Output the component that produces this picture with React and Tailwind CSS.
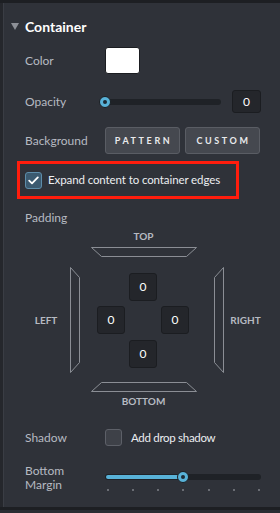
import React from 'react';

function Trapezoid({ side }) {
  // outlines of the padding edges
  const shapes = {
    top: { w: 106, h: 10, pts: '0.5,0.5 105.5,0.5 95.5,9.5 10.5,9.5' },
    bottom: { w: 106, h: 10, pts: '10.5,0.5 95.5,0.5 105.5,9.5 0.5,9.5' },
    left: { w: 10, h: 106, pts: '0.5,0.5 9.5,10.5 9.5,95.5 0.5,105.5' },
    right: { w: 10, h: 106, pts: '9.5,0.5 0.5,10.5 0.5,95.5 9.5,105.5' },
  };
  const s = shapes[side];
  return (
    <svg width={s.w} height={s.h} viewBox={`0 0 ${s.w} ${s.h}`} className="block shrink-0">
      <polygon points={s.pts} fill="none" stroke="#8b8e95" strokeWidth="1" />
    </svg>
  );
}

function NumBox({ value = '0', className = '' }) {
  return (
    <div className={`flex items-center justify-center rounded-[3px] border border-[#1b1d21] bg-[#24262b] text-[12px] text-white ${className}`}>
      {value}
    </div>
  );
}

function Knob() {
  return (
    <div className="flex h-[12px] w-[12px] items-center justify-center rounded-full border border-[#1b1d21] bg-[#58b2d8]">
      <div className="h-[4px] w-[4px] rounded-full bg-[#1d2b35]" />
    </div>
  );
}

function Label({ children }) {
  return <div className="w-[80px] shrink-0 text-[12px] text-[#b6bac2]">{children}</div>;
}

export default function App() {
  const ticks = [0, 1, 2, 3, 4, 5, 6];
  return (
    <div className="flex h-[513px] w-[280px] flex-col overflow-hidden bg-[#2f3239]" style={{ fontFamily: 'Lato, "Noto Sans", sans-serif' }}>
      <div className="h-[3px] shrink-0 bg-[#1d1f23]" />
      <div className="flex flex-1">
        <div className="w-[4px] shrink-0 border-r border-[#3a3d44] bg-[#25272c]" />
        <div className="flex flex-1 flex-col">
          <div className="flex flex-1 flex-col pl-[21px] pr-[19px]">
            {/* header */}
            <div className="mt-[9px] flex h-[28px] items-center">
              <div className="-ml-[14px] mr-[6px] h-0 w-0 border-x-[4px] border-t-[7px] border-x-transparent border-t-[#8d9097]" />
              <span className="text-[14px] font-bold text-white">Container</span>
            </div>

            {/* color */}
            <div className="mt-[7px] flex h-[27px] items-center">
              <Label>Color</Label>
              <div className="h-[27px] w-[35px] rounded-[3px] border border-[#1b1d21] bg-white" />
            </div>

            {/* opacity */}
            <div className="mt-[16px] flex h-[23px] items-center">
              <div className="w-[75px] shrink-0 text-[12px] text-[#b6bac2]">Opacity</div>
              <div className="relative flex h-[6px] w-[121px] items-center rounded-full bg-[#1f2227]">
                <div className="absolute -left-[1px] top-1/2 -translate-y-1/2">
                  <Knob />
                </div>
              </div>
              <NumBox className="ml-auto h-[23px] w-[29px]" />
            </div>

            {/* background */}
            <div className="mt-[14px] flex h-[27px] items-center">
              <Label>Background</Label>
              <div className="flex gap-[5px]">
                {['PATTERN', 'CUSTOM'].map((t) => (
                  <div key={t} className="flex h-[27px] w-[75px] items-center justify-center rounded-[3px] border border-[#5a5d64] bg-[#45484f] pl-[2px] text-[9px] font-bold tracking-[2.6px] text-[#e9eaec]">
                    {t}
                  </div>
                ))}
              </div>
            </div>

            {/* expand */}
            <div className="-ml-[8px] mt-[7px] flex h-[38px] w-[222px] items-center border-[3px] border-[#ff1d0d] pl-[5px]">
              <div className="flex h-[17px] w-[17px] items-center justify-center rounded-[3px] border border-[#5d8daa] bg-[#3b5a70]">
                <svg width="11" height="9" viewBox="0 0 11 9">
                  <path d="M1.2 4.6 L4 7.3 L9.8 1.4" fill="none" stroke="#ffffff" strokeWidth="1.8" strokeLinecap="round" strokeLinejoin="round" />
                </svg>
              </div>
              <span className="ml-[6px] text-[11.5px] tracking-[-0.1px] text-[#eceef1]">Expand content to container edges</span>
            </div>

            {/* padding */}
            <div className="mt-[11px] flex h-[16px] items-center text-[12px] text-[#b6bac2]">Padding</div>

            <div className="flex w-[236px] flex-col">
              <div className="mt-[4px] flex h-[12px] items-center justify-center pl-[1px] text-[10px] font-bold text-[#b6bac2]">TOP</div>
              <div className="mt-[5px] flex justify-center pl-[1px]">
                <Trapezoid side="top" />
              </div>
              <div className="mt-[10px] flex h-[106px] items-center">
                <div className="w-[42px] shrink-0 text-center text-[10px] font-bold text-[#b6bac2]">LEFT</div>
                <div className="ml-[3px]">
                  <Trapezoid side="left" />
                </div>
                <div className="ml-[17px] grid grid-cols-[28px_28px_28px] grid-rows-[28px_28px_28px] gap-x-[4px] gap-y-[5.5px]">
                  <div />
                  <NumBox />
                  <div />
                  <NumBox />
                  <div />
                  <NumBox />
                  <div />
                  <NumBox />
                  <div />
                </div>
                <div className="ml-[25px]">
                  <Trapezoid side="right" />
                </div>
                <div className="ml-[6px] w-[31px] shrink-0 text-center text-[10px] font-bold text-[#b6bac2]">RIGHT</div>
              </div>
              <div className="mt-[9px] flex justify-center pl-[1px]">
                <Trapezoid side="bottom" />
              </div>
              <div className="mt-[3px] flex h-[12px] items-center justify-center pl-[1px] text-[10px] font-bold text-[#b6bac2]">BOTTOM</div>
            </div>

            {/* shadow */}
            <div className="mt-[21px] flex h-[19px] items-center">
              <Label>Shadow</Label>
              <div className="h-[17px] w-[17px] rounded-[3px] border border-[#5d6068] bg-[#3e4148]" />
              <span className="ml-[9px] text-[11.5px] tracking-[-0.3px] text-[#eceef1]">Add drop shadow</span>
            </div>

            {/* bottom margin */}
            <div className="mt-[17px] flex h-[28px]">
              <div className="w-[80px] shrink-0 text-[12px] leading-[14px] text-[#b6bac2]">
                Bottom
                <br />
                Margin
              </div>
              <div className="flex w-[156px] flex-col pt-[10px]">
                <div className="relative flex h-[6px] items-center rounded-full bg-[#1f2227]">
                  <div className="ml-[1px] h-[4px] w-[77px] rounded-full bg-[#58b2d8]" />
                  <div className="absolute left-[72px] top-1/2 -translate-y-1/2">
                    <Knob />
                  </div>
                </div>
                <div className="mt-[9px] flex justify-between pl-[2px] pr-[1px]">
                  {ticks.map((i) => (
                    <div key={i} className="h-[2px] w-[2px] bg-[#6a6d74]" />
                  ))}
                </div>
              </div>
            </div>
          </div>
          <div className="mt-[10px]" />
        </div>
      </div>
      <div className="h-[3px] shrink-0 bg-[#1d1f23]" />
      <div className="h-[3px] shrink-0 bg-[#2a2d33]" />
    </div>
  );
}
